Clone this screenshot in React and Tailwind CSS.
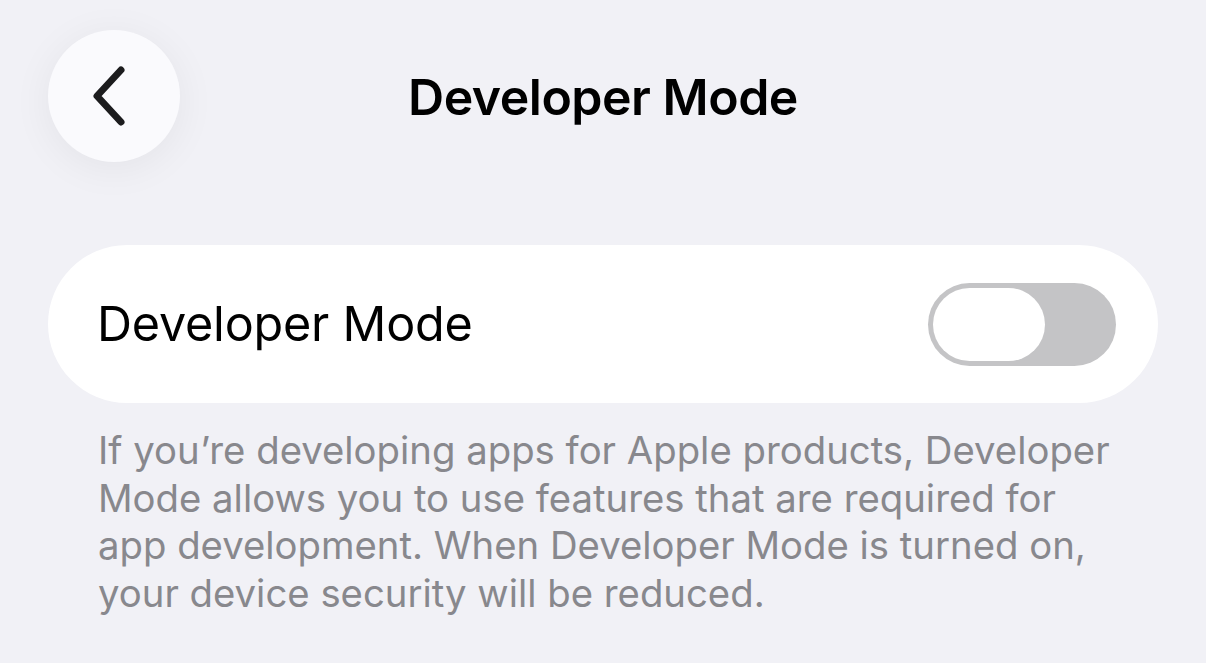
export default function App() {
  return (
    <div
      className="w-[1206px] h-[663px] overflow-hidden bg-[#f1f1f6] text-black"
      style={{ fontFamily: 'Inter, "Noto Sans", sans-serif' }}
    >
      {/* Navigation bar */}
      <div className="relative h-[245px]">
        <div className="flex items-start pt-[30px] pl-[48px]">
          <button className="w-[132px] h-[132px] rounded-full bg-[#fafafd] flex items-center justify-center shadow-[0_6px_40px_rgba(0,0,0,0.06)]">
            <svg width="40" height="62" viewBox="0 0 40 62" fill="none" className="mr-[10px]">
              <path
                d="M32 5 L8 31 L32 57"
                stroke="#1c1c1e"
                strokeWidth="7"
                strokeLinecap="round"
                strokeLinejoin="round"
              />
            </svg>
          </button>
        </div>
        <h1 className="absolute left-0 right-0 top-[64px] text-center text-[50px] font-semibold tracking-[-0.5px] leading-[66px]">
          Developer Mode
        </h1>
      </div>

      {/* Settings card */}
      <div className="mx-[48px] h-[158px] rounded-full bg-white flex items-center justify-between pl-[49px] pr-[42px]">
        <span className="text-[48.5px] leading-none tracking-[-0.2px]">Developer Mode</span>
        <div className="w-[188px] h-[83px] rounded-full bg-[#c4c4c6] p-[5px] flex items-center">
          <div className="w-[112px] h-[73px] rounded-full bg-white" />
        </div>
      </div>

      {/* Footer explanation */}
      <p className="mt-[24px] ml-[98px] w-[1030px] text-[38.3px] leading-[47.5px] text-[#88888d]">
        If you’re developing apps for Apple products, Developer Mode allows you to use features that are required for app development. When Developer Mode is turned on, your device security will be reduced.
      </p>
    </div>
  );
}
